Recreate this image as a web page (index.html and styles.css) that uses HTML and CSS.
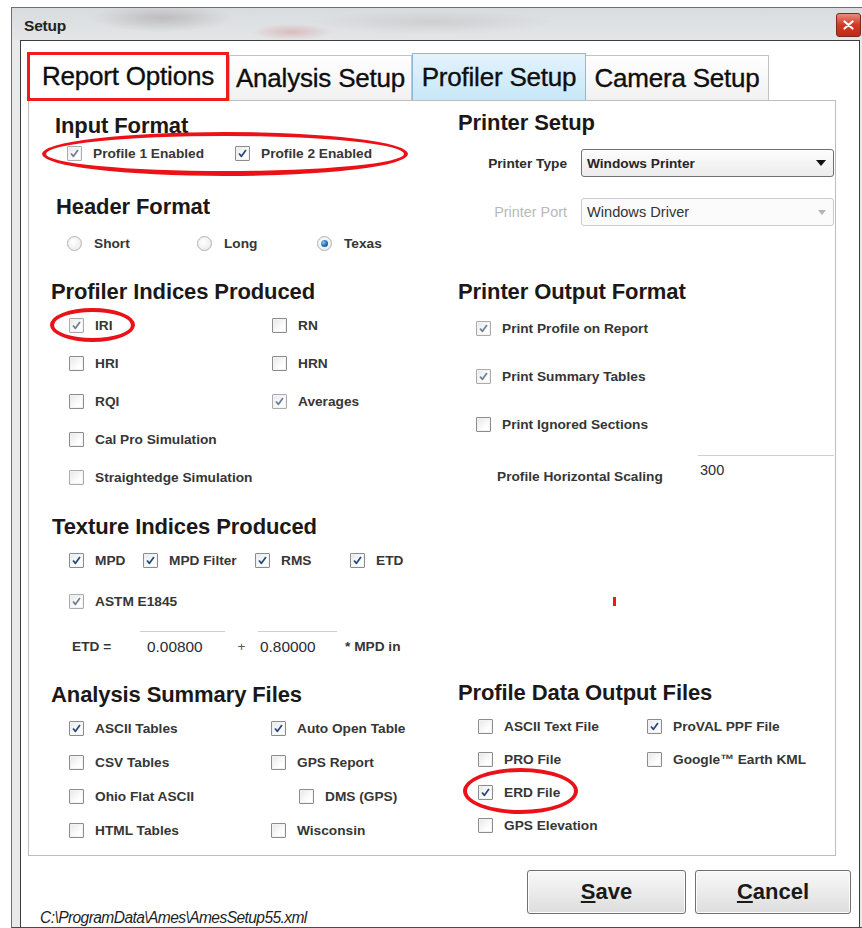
FILE: index.html
```html
<!DOCTYPE html>
<html lang="en">
<head>
<meta charset="utf-8">
<title>Setup</title>
<link rel="stylesheet" href="styles.css">
</head>
<body>
<div class="window">
  <div class="titlebar">
    <span class="title">Setup</span>
    <span class="close">
      <svg width="11" height="10" viewBox="0 0 11 10"><path d="M1.5 1.5l8 7M9.5 1.5l-8 7" stroke="#fff" stroke-width="2.2" stroke-linecap="round"/></svg>
    </span>
  </div>

  <div class="client">
    <div class="tabs">
      <div class="tab tab-report">Report Options</div>
      <div class="tab tab-analysis">Analysis Setup</div>
      <div class="tab tab-profiler">Profiler Setup</div>
      <div class="tab tab-camera">Camera Setup</div>
    </div>

    <div class="panel">
      <!-- row 1, left: input / header format -->
      <div class="cell cell-formats">
        <h2 class="heading heading-input">Input Format</h2>
        <div class="profile-row">
          <label class="cb w168"><span class="box dim"><svg viewBox="0 0 15 15"><path d="M3.5 7.5l2.8 3.3 5.2-7.3"/></svg></span><span>Profile 1 Enabled</span></label>
          <label class="cb"><span class="box"><svg viewBox="0 0 15 15"><path d="M3.5 7.5l2.8 3.3 5.2-7.3"/></svg></span><span>Profile 2 Enabled</span></label>
        </div>
        <h2 class="heading heading-header">Header Format</h2>
        <div class="radio-row">
          <label class="rb w130"><span class="dot"></span><span>Short</span></label>
          <label class="rb w120"><span class="dot"></span><span>Long</span></label>
          <label class="rb"><span class="dot on"></span><span>Texas</span></label>
        </div>
      </div>

      <!-- row 1, right: printer setup -->
      <div class="cell cell-printer">
        <h2 class="heading">Printer Setup</h2>
        <div class="field field-type">
          <span class="field-label">Printer Type</span>
          <span class="select"><span>Windows Printer</span><span class="arrow"></span></span>
        </div>
        <div class="field field-port">
          <span class="field-label disabled">Printer Port</span>
          <span class="select select-disabled"><span>Windows Driver</span><span class="arrow"></span></span>
        </div>
      </div>

      <!-- row 2, left: profiler + texture indices -->
      <div class="cell cell-indices">
        <h2 class="heading">Profiler Indices Produced</h2>
        <div class="indices-grid">
          <label class="cb"><span class="box dim"><svg viewBox="0 0 15 15"><path d="M3.5 7.5l2.8 3.3 5.2-7.3"/></svg></span><span>IRI</span></label>
          <label class="cb"><span class="box"></span><span>RN</span></label>
          <label class="cb"><span class="box"></span><span>HRI</span></label>
          <label class="cb"><span class="box"></span><span>HRN</span></label>
          <label class="cb"><span class="box"></span><span>RQI</span></label>
          <label class="cb"><span class="box dim"><svg viewBox="0 0 15 15"><path d="M3.5 7.5l2.8 3.3 5.2-7.3"/></svg></span><span>Averages</span></label>
          <label class="cb span2"><span class="box"></span><span>Cal Pro Simulation</span></label>
          <label class="cb span2"><span class="box dim"></span><span>Straightedge Simulation</span></label>
        </div>

        <h2 class="heading heading-texture">Texture Indices Produced</h2>
        <div class="texture-row">
          <label class="cb w74"><span class="box"><svg viewBox="0 0 15 15"><path d="M3.5 7.5l2.8 3.3 5.2-7.3"/></svg></span><span>MPD</span></label>
          <label class="cb w112"><span class="box"><svg viewBox="0 0 15 15"><path d="M3.5 7.5l2.8 3.3 5.2-7.3"/></svg></span><span>MPD Filter</span></label>
          <label class="cb w95"><span class="box"><svg viewBox="0 0 15 15"><path d="M3.5 7.5l2.8 3.3 5.2-7.3"/></svg></span><span>RMS</span></label>
          <label class="cb"><span class="box"><svg viewBox="0 0 15 15"><path d="M3.5 7.5l2.8 3.3 5.2-7.3"/></svg></span><span>ETD</span></label>
        </div>
        <div class="astm-row">
          <label class="cb"><span class="box dim"><svg viewBox="0 0 15 15"><path d="M3.5 7.5l2.8 3.3 5.2-7.3"/></svg></span><span>ASTM E1845</span></label>
        </div>
        <div class="etd-row">
          <span class="etd-label">ETD =</span>
          <span class="textbox tb-a">0.00800</span>
          <span class="plus">+</span>
          <span class="textbox tb-b">0.80000</span>
          <span class="etd-unit">* MPD in</span>
        </div>
      </div>

      <!-- row 2, right: printer output -->
      <div class="cell cell-output">
        <h2 class="heading">Printer Output Format</h2>
        <div class="output-list">
          <label class="cb"><span class="box dim"><svg viewBox="0 0 15 15"><path d="M3.5 7.5l2.8 3.3 5.2-7.3"/></svg></span><span>Print Profile on Report</span></label>
          <label class="cb"><span class="box dim"><svg viewBox="0 0 15 15"><path d="M3.5 7.5l2.8 3.3 5.2-7.3"/></svg></span><span>Print Summary Tables</span></label>
          <label class="cb"><span class="box"></span><span>Print Ignored Sections</span></label>
        </div>
        <div class="scaling-row">
          <span class="scaling-label">Profile Horizontal Scaling</span>
          <span class="textbox tb-scale">300</span>
        </div>
        <span class="speck"></span>
      </div>

      <!-- row 3, left: analysis summary files -->
      <div class="cell cell-summary">
        <h2 class="heading">Analysis Summary Files</h2>
        <div class="summary-grid">
          <label class="cb"><span class="box"><svg viewBox="0 0 15 15"><path d="M3.5 7.5l2.8 3.3 5.2-7.3"/></svg></span><span>ASCII Tables</span></label>
          <label class="cb"><span class="box"><svg viewBox="0 0 15 15"><path d="M3.5 7.5l2.8 3.3 5.2-7.3"/></svg></span><span>Auto Open Table</span></label>
          <label class="cb"><span class="box"></span><span>CSV Tables</span></label>
          <label class="cb"><span class="box"></span><span>GPS Report</span></label>
          <label class="cb"><span class="box"></span><span>Ohio Flat ASCII</span></label>
          <label class="cb indent"><span class="box"></span><span>DMS (GPS)</span></label>
          <label class="cb"><span class="box"></span><span>HTML Tables</span></label>
          <label class="cb"><span class="box"></span><span>Wisconsin</span></label>
        </div>
      </div>

      <!-- row 3, right: profile data output files -->
      <div class="cell cell-files">
        <h2 class="heading">Profile Data Output Files</h2>
        <div class="files-grid">
          <label class="cb"><span class="box"></span><span>ASCII Text File</span></label>
          <label class="cb"><span class="box"><svg viewBox="0 0 15 15"><path d="M3.5 7.5l2.8 3.3 5.2-7.3"/></svg></span><span>ProVAL PPF File</span></label>
          <label class="cb"><span class="box"></span><span>PRO File</span></label>
          <label class="cb"><span class="box"></span><span>Google™ Earth KML</span></label>
          <label class="cb span2"><span class="box"><svg viewBox="0 0 15 15"><path d="M3.5 7.5l2.8 3.3 5.2-7.3"/></svg></span><span>ERD File</span></label>
          <label class="cb span2"><span class="box"></span><span>GPS Elevation</span></label>
        </div>
      </div>

      <!-- hand-drawn red rings -->
      <span class="ring ring-input"></span>
      <span class="ring ring-iri"></span>
      <span class="ring ring-erd"></span>
    </div>

    <div class="footer">
      <span class="path">C:\ProgramData\Ames\AmesSetup55.xml</span>
      <div class="buttons">
        <button class="btn btn-save"><u>S</u>ave</button>
        <button class="btn btn-cancel"><u>C</u>ancel</button>
      </div>
    </div>
  </div>
</div>
</body>
</html>
```

FILE: styles.css
```css
* { box-sizing: border-box; }

html, body {
  margin: 0;
  background: #ffffff;
  font-family: "Liberation Sans", Arial, sans-serif;
  color: #333;
}

/* ---------- window frame ---------- */
.window {
  margin: 7px 0 0 11px;
  width: 851px;
  height: 921px;
  border-left: 1px solid #6d6f72;
  border-top: 1px solid #6d6f72;
  border-bottom: 1px solid #4a4a4a;
  padding-left: 8px;
  background: #e7e9eb;
  display: flex;
  flex-direction: column;
}

.titlebar {
  height: 32px;
  flex: none;
  display: flex;
  align-items: center;
  margin-left: -8px;
  padding: 4px 0 0 12px;
  background:
    radial-gradient(ellipse 70px 14px at 150px 10px, rgba(110, 100, 100, 0.28), transparent),
    radial-gradient(ellipse 40px 8px at 280px 24px, rgba(200, 70, 70, 0.25), transparent),
    radial-gradient(ellipse 120px 12px at 420px 14px, rgba(150, 150, 150, 0.22), transparent),
    linear-gradient(#d9dcdf, #e3e5e7);
  position: relative;
}

.title {
  font-size: 15.5px;
  font-weight: bold;
  color: #222;
  letter-spacing: -0.2px;
}

.close {
  position: absolute;
  right: 1px;
  top: 5px;
  width: 25px;
  height: 24px;
  border: 1px solid #7a2a22;
  border-radius: 3px;
  background: linear-gradient(#e98a7e, #cf3a26 50%, #c02a18);
  display: flex;
  align-items: center;
  justify-content: center;
}

/* ---------- client area ---------- */
.client {
  flex: 1;
  width: 840px;
  border: 1px solid #3c3c3c;
  border-bottom: none;
  background: #ffffff;
  padding: 11px 0 0 6px;
  display: flex;
  flex-direction: column;
}

/* tabs */
.tabs {
  display: flex;
  align-items: flex-end;
  height: 48px;
}

.tab {
  height: 45px;
  display: flex;
  align-items: center;
  justify-content: center;
  font-size: 26px;
  color: #0e0e0e;
  -webkit-text-stroke: 0.35px #0e0e0e;
  letter-spacing: -0.2px;
  border: 1px solid #c3c3c3;
  border-bottom: none;
  background: linear-gradient(#ffffff, #f1f1f1);
}

.tab-report {
  width: 202px;
  height: 49px;
  margin-bottom: -1px;
  border: 3px solid #ee1c1c;
  background: #ffffff;
  position: relative;
  z-index: 2;
}

.tab-analysis { width: 183px; }

.tab-profiler {
  width: 174px;
  height: 47px;
  border-color: #8fb9d6;
  background: linear-gradient(#e3f3fc, #c7e7f8);
}

.tab-camera { width: 183px; border-left: none; }

/* tab page */
.panel {
  position: relative;
  margin-left: 1px;
  width: 808px;
  height: 756px;
  flex: none;
  border: 1px solid #bdbdbd;
  padding-left: 22px;
  display: grid;
  grid-template-columns: 407px 1fr;
  grid-template-rows: 169px 405px 1fr;
}

.cell { position: relative; }

.heading {
  margin: 0;
  font-size: 22px;
  line-height: 26px;
  font-weight: bold;
  color: #1c1818;
  letter-spacing: -0.1px;
}

/* checkboxes & radios */
.cb, .rb {
  display: flex;
  align-items: center;
  height: 20px;
  gap: 11px;
  font-size: 13.7px;
  font-weight: bold;
  color: #363636;
  white-space: nowrap;
}

.box {
  width: 15px;
  height: 15px;
  flex: none;
  border: 1px solid #8a8c8e;
  border-radius: 1px;
  background: linear-gradient(135deg, #e6e7e8, #ffffff 70%);
  box-shadow: inset 0 0 0 1px #f2f2f2;
  display: flex;
  align-items: center;
  justify-content: center;
}

.box svg {
  width: 13px;
  height: 13px;
  fill: none;
  stroke: #24497f;
  stroke-width: 2;
  stroke-linejoin: round;
}

.box.dim { border-color: #a9abad; }
.box.dim svg { stroke: #6f7f93; }

.rb { gap: 12px; }

.dot {
  width: 15px;
  height: 15px;
  flex: none;
  border-radius: 50%;
  border: 1px solid #b0b2b4;
  background: radial-gradient(circle at 40% 40%, #ffffff, #e4e5e6);
  display: flex;
  align-items: center;
  justify-content: center;
}

.dot.on::after {
  content: "";
  width: 7px;
  height: 7px;
  border-radius: 50%;
  background: radial-gradient(circle at 35% 35%, #8cc4ef, #1565b5 60%, #0b3f7a);
}

.w74 { width: 74px; }
.w95 { width: 95px; }
.w112 { width: 112px; }
.w120 { width: 120px; }
.w130 { width: 130px; }
.w168 { width: 168px; }
.span2 { grid-column: 1 / 3; }

/* row 1 left */
.cell-formats { padding-top: 12px; }
.heading-input { padding-left: 4px; }
.profile-row { display: flex; margin-top: 4px; padding-left: 16px; }
.heading-header { margin-top: 31px; padding-left: 5px; }
.radio-row { display: flex; margin-top: 13px; padding-left: 16px; }

/* row 1 right */
.cell-printer { padding-top: 9px; }

.field {
  display: flex;
  align-items: center;
  gap: 14px;
  height: 28px;
}
.field-type { margin-top: 13px; }
.field-port { margin-top: 21px; }

.field-label {
  width: 109px;
  text-align: right;
  font-size: 13.7px;
  font-weight: bold;
  color: #2c2c2c;
}
.field-label.disabled { color: #b9b9b9; font-weight: normal; font-size: 14.4px; }

.select {
  width: 253px;
  height: 28px;
  border: 1px solid #6f7173;
  border-radius: 3px;
  background: linear-gradient(#fdfdfd, #ececec);
  display: flex;
  align-items: center;
  justify-content: space-between;
  padding: 0 7px 0 5px;
  font-size: 13.7px;
  font-weight: bold;
  color: #2a2426;
}

.arrow {
  width: 0;
  height: 0;
  border-left: 5px solid transparent;
  border-right: 5px solid transparent;
  border-top: 6px solid #111;
}

.select-disabled {
  border-color: #c9cacb;
  background: #fbfbfb;
  font-weight: normal;
  font-size: 14.6px;
  color: #333;
}
.select-disabled .arrow { border-top-color: #b5b5b5; border-left-width: 4px; border-right-width: 4px; border-top-width: 5px; }

/* row 2 left */
.cell-indices { padding-top: 9px; }

.indices-grid {
  display: grid;
  grid-template-columns: 203px 1fr;
  row-gap: 18px;
  margin-top: 10px;
  padding-left: 18px;
}

.heading-texture { margin-top: 27px; padding-left: 1px; }
.texture-row { display: flex; margin-top: 10px; padding-left: 18px; }
.astm-row { margin-top: 21px; padding-left: 18px; }

.etd-row {
  display: flex;
  align-items: center;
  height: 30px;
  margin-top: 20px;
  padding-left: 21px;
  font-size: 13.7px;
  font-weight: bold;
  color: #363636;
}
.etd-label { width: 68px; }
.plus { width: 33px; text-align: center; font-weight: normal; color: #555; }
.etd-unit { margin-left: 8px; }

.textbox {
  height: 30px;
  border-top: 1px solid #cfcfcf;
  display: flex;
  align-items: center;
  padding-left: 7px;
  font-size: 15.4px;
  font-weight: normal;
  color: #2b2b36;
}
.tb-a { width: 85px; }
.tb-b { width: 79px; padding-left: 2px; }

/* row 2 right */
.cell-output { padding-top: 9px; }

.output-list {
  display: flex;
  flex-direction: column;
  gap: 28px;
  margin-top: 13px;
  padding-left: 18px;
}

.scaling-row {
  display: flex;
  align-items: flex-start;
  margin-top: 21px;
}
.scaling-label {
  width: 240px;
  padding-left: 39px;
  margin-top: 14px;
  font-size: 13.7px;
  font-weight: bold;
  color: #363636;
}
.tb-scale {
  width: 136px;
  height: 28px;
  padding-left: 2px;
  font-size: 14.5px;
}

.speck {
  position: absolute;
  left: 155px;
  top: 327px;
  width: 3px;
  height: 9px;
  background: #f01818;
}

/* row 3 left */
.cell-summary { padding-top: 7px; }
.summary-grid {
  display: grid;
  grid-template-columns: 202px 1fr;
  row-gap: 14px;
  margin-top: 10px;
  padding-left: 18px;
}
.indent { padding-left: 28px; }

/* row 3 right */
.cell-files { padding-top: 5px; }
.files-grid {
  display: grid;
  grid-template-columns: 169px 1fr;
  row-gap: 13px;
  margin-top: 10px;
  padding-left: 20px;
}

/* red rings drawn over the page */
.ring {
  position: absolute;
  border: 4px solid #ea1218;
  border-radius: 50%;
  pointer-events: none;
}
.ring-input { left: 13px; top: 31px; width: 366px; height: 44px; border-width: 4px 4px 5px 4px; }
.ring-iri { left: 21px; top: 207px; width: 85px; height: 34px; }
.ring-erd { left: 434px; top: 667px; width: 115px; height: 46px; }

/* footer */
.footer {
  display: flex;
  align-items: flex-start;
  padding-top: 14px;
}

.path {
  margin: 39px 0 0 13px;
  font-size: 15.6px;
  line-height: 18px;
  font-style: italic;
  letter-spacing: -0.6px;
  color: #1e1e1e;
}

.buttons {
  margin-left: auto;
  margin-right: 8px;
  display: flex;
  gap: 9px;
}

.btn {
  height: 44px;
  border: 1px solid #707070;
  border-radius: 3px;
  background: linear-gradient(#f8f8f8, #ebebeb 50%, #dddddd);
  box-shadow: inset 0 0 0 1px #fcfcfc;
  font-family: "Liberation Sans", Arial, sans-serif;
  font-size: 22px;
  font-weight: bold;
  color: #1a1a1a;
  padding: 0;
}
.btn-save { width: 159px; }
.btn-cancel { width: 156px; }
```
